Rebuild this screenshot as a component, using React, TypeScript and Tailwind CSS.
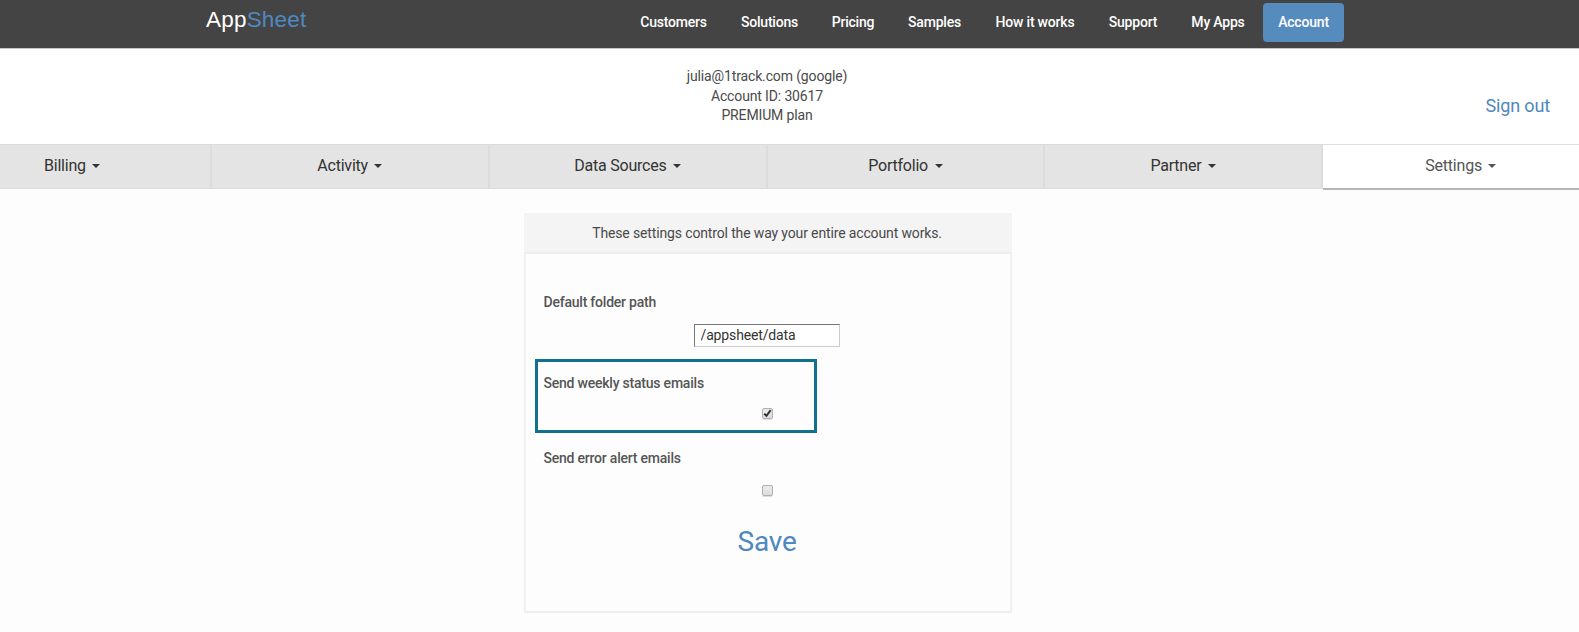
const navItems = [
  { label: 'Customers', box: 'w-[101px]' },
  { label: 'Solutions', box: 'w-[91px]' },
  { label: 'Pricing', box: 'w-[76px]' },
  { label: 'Samples', box: 'w-[87px]' },
  { label: 'How it works', box: 'w-[114px]' },
  { label: 'Support', box: 'w-[82px]' },
  { label: 'My Apps', box: 'w-[88px]' },
];

const tabs = ['Billing', 'Activity', 'Data Sources', 'Portfolio', 'Partner', 'Settings'];

function Caret() {
  return (
    <svg className="ml-[6.5px] mt-px h-1 w-2" viewBox="0 0 8 4" fill="currentColor" aria-hidden="true">
      <path d="M0 0h8L4 4z" />
    </svg>
  );
}

function Checkbox({ checked = false }: { checked?: boolean }) {
  return (
    <span
      role="checkbox"
      aria-checked={checked}
      className="flex h-[11px] w-[11px] shrink-0 items-center justify-center rounded-[2px] border border-[#b0b0b0] bg-linear-to-b from-[#ececec] to-[#dcdcdc] shadow-[0_1px_0_#dedede]"
    >
      {checked && (
        <svg className="h-[9px] w-[9px] shrink-0" viewBox="0 0 9 9" fill="none" stroke="#333" strokeWidth="2">
          <path d="M1.2 4.8 3.5 6.8 7.7 1.2" />
        </svg>
      )}
    </span>
  );
}

export default function App() {
  return (
    <div className="h-[632px] w-full overflow-hidden bg-[#fdfdfd] font-['Roboto',sans-serif] text-sm tracking-[-0.14px] text-[#4a4a4a]">
      <header className="flex h-[49px] items-start border-b border-[#c8c8c8] bg-[#444] pl-[206px]">
        <div className="w-[417px] pt-[7px] font-['Liberation_Sans',sans-serif] text-[22.5px] leading-[26px] tracking-[0.2px] text-white">
          App<span className="text-[#5089c0]">Sheet</span>
        </div>
        <nav className="flex pt-[3px] font-medium tracking-[-0.2px] text-white">
          {navItems.map((item) => (
            <a key={item.label} className={`flex h-[38px] items-center justify-center whitespace-nowrap ${item.box}`}>
              {item.label}
            </a>
          ))}
          <a className="ml-px flex h-[39px] w-[81px] items-center justify-center rounded bg-[#568bbd] pb-px">Account</a>
        </nav>
      </header>

      <section className="grid h-[95px] grid-cols-[1fr_534px_1fr] bg-white">
        <div />
        <div className="-ml-[45px] pt-[18px] text-center leading-[19.5px]">
          <p>julia@1track.com (google)</p>
          <p>Account ID: 30617</p>
          <p>PREMIUM plan</p>
        </div>
        <div className="pr-[29px] pt-[44px] text-right text-lg leading-[26px] text-[#4e88be]">Sign out</div>
      </section>

      <div className="-ml-[65.75px] flex h-[46px] w-[1667px] text-base tracking-[-0.22px] text-[#333]">
        {tabs.map((tab) => {
          const active = tab === 'Settings';
          return (
            <div
              key={tab}
              className={`flex w-[277.75px] shrink-0 items-center justify-center border-t ${
                active
                  ? 'h-[46px] border-b-2 border-t-[#dedede] border-b-[#b5b5b5] bg-white pb-[2px] pr-[2px] text-[#555]'
                  : 'h-[45px] border-b border-r-2 border-[#dcdcdc] bg-[#e4e4e4] pb-[2px]'
              }`}
            >
              {tab}
              <Caret />
            </div>
          );
        })}
      </div>

      <main className="ml-[524px] mt-[23px] h-[400px] w-[488px]">
        <div className="flex h-[39px] items-center justify-center bg-[#f4f4f4] pr-[2px]">
          These settings control the way your entire account works.
        </div>
        <div className="h-[361px] border-2 border-t-[#eee] border-x-[#f1f1f1] border-b-[#eee] pl-[9px] pt-[38px]">
          <div className="pl-[8.5px] font-medium leading-5 tracking-[-0.22px] text-[#555]">Default folder path</div>
          <input
            readOnly
            value="/appsheet/data"
            className="ml-[159px] mt-[12px] block h-[23px] w-[146px] border border-b-[#ccc] border-l-[#777] border-r-[#ccc] border-t-[#777] bg-white pb-[2px] pl-[5.5px] leading-[18px] text-[#333] outline-none"
          />
          <div className="mt-[12px] h-[74px] w-[282px] border-[3px] border-[#12718f] pl-[5.5px] pt-[11px]">
            <div className="font-medium leading-5 tracking-[-0.22px] text-[#555]">Send weekly status emails</div>
            <div className="ml-[218px] mt-[15px]">
              <Checkbox checked />
            </div>
          </div>
          <div className="pl-[8.5px] pt-[15px] font-medium leading-5 tracking-[-0.22px] text-[#555]">Send error alert emails</div>
          <div className="ml-[227px] mt-[17px]">
            <Checkbox />
          </div>
          <div className="pr-[11px] pt-[30px] text-center text-[28px] leading-8 tracking-[-0.2px] text-[#4e88be]">Save</div>
        </div>
      </main>
    </div>
  );
}
